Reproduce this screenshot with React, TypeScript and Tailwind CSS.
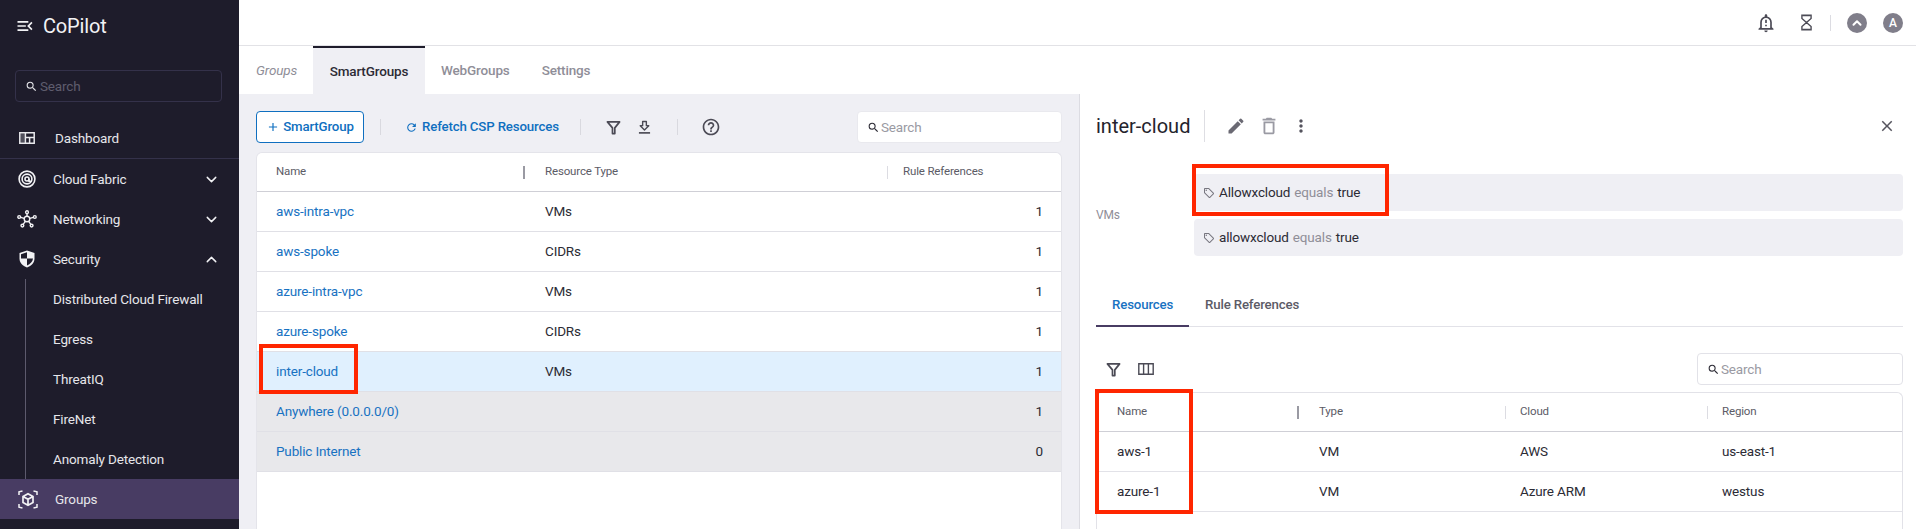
import React from 'react';
import { ChevronDown, ChevronUp } from 'lucide-react';
import {
  MdAdd,
  MdClose,
  MdEdit,
  MdHelpOutline,
  MdMenuOpen,
  MdMoreVert,
  MdOutlineDelete,
  MdOutlineLocalOffer,
  MdOutlineNotificationImportant,
  MdRefresh,
  MdSearch,
} from 'react-icons/md';

const FilterIcon = ({ className }: { className?: string }) => (
  <svg viewBox="0 0 16 16" className={className} fill="none" stroke="currentColor" strokeWidth="1.8">
    <path d="M1.5 2h13L9.4 8.4V14.5H6.9V8.4z" strokeLinejoin="round" />
  </svg>
);

const DownloadIcon = ({ className }: { className?: string }) => (
  <svg viewBox="0 0 14 16" className={className} fill="none" stroke="currentColor" strokeWidth="1.5">
    <path d="M5 1.5h4v4.500h2.600L7 10.600 2.400 6H5z" strokeLinejoin="round" />
    <path d="M1 13.800h12" strokeWidth="1.800" />
  </svg>
);

const ColumnsIcon = ({ className }: { className?: string }) => (
  <svg viewBox="0 0 16 12" className={className} fill="none" stroke="currentColor" strokeWidth="1.4">
    <path d="M.8.8h14.400v10.400H.8zM5.600.8v10.400M10.400.8v10.400" />
  </svg>
);

const HourglassIcon = ({ className }: { className?: string }) => (
  <svg viewBox="0 0 12 18" className={className} fill="none" stroke="currentColor" strokeWidth="1.500">
    <path d="M1 1h10v3.600L6 9l5 4.400V17H1v-3.600L6 9 1 4.600z" />
    <path d="M1.500 1.500h9M1.500 16.500h9" strokeWidth="1.500" />
  </svg>
);

const DashboardIcon = () => (
  <svg viewBox="0 0 16 12" className="w-[16px] h-[12px]" fill="none" stroke="#e8e8ec" strokeWidth="1.500">
    <path d="M.8.8h14.400v10.400H.8zM6.400.8v10.400M6.400 5.400h8.800M10.600 5.400v5.800" />
    <path d="M1.500 1.500h4.200v9H1.500z" fill="#e8e8ec" fillOpacity=".25" stroke="none" />
  </svg>
);

const FabricIcon = () => (
  <svg viewBox="0 0 18 18" className="w-[18px] h-[18px]" fill="none" stroke="#f2f2f5" strokeWidth="1.600">
    <circle cx="9" cy="9" r="7.900" />
    <circle cx="9" cy="9" r="4.900" />
    <circle cx="9" cy="9" r="2" />
    <path d="M11 9v2.200h3" />
  </svg>
);

const NetworkIcon = () => (
  <svg viewBox="0 0 20 18" className="w-[20px] h-[18px]" fill="none" stroke="#f2f2f5" strokeWidth="1.400">
    <circle cx="10" cy="9" r="2.800" />
    <circle cx="10" cy="2.200" r="1.400" />
    <circle cx="2.200" cy="7" r="1.400" />
    <circle cx="17.800" cy="7" r="1.400" />
    <circle cx="5.400" cy="15.600" r="1.400" />
    <circle cx="14.600" cy="15.600" r="1.400" />
    <path d="M10 3.600v2.600M3.600 7.400l3.600 1M16.400 7.400l-3.600 1M6.100 14.400l2.300-3.100M13.900 14.400l-2.300-3.100" />
  </svg>
);

const ShieldIcon = () => (
  <svg viewBox="0 0 16 18" className="w-[16px] h-[18px]">
    <path d="M8 .5 15.500 3v5.600c0 4.200-3 7.500-7.500 8.900C3.500 16.100.5 12.800.5 8.600V3z" fill="#f2f2f5" />
    <path d="M8 2.200V8.500H2V4.200zM8 8.500h6c-.3 3-2.600 5.500-6 6.900z" fill="#1e1c2b" />
  </svg>
);

const CubeIcon = () => (
  <svg viewBox="0 0 20 19" className="w-[20px] h-[19px]" fill="none" stroke="#f2f2f5" strokeWidth="1.500">
    <path d="M1 5V1.800L4.500 1M15.500 1 19 1.800V5M1 14v3.200l3.500.8M15.500 18l3.500-.8V14" />
    <path d="M10 3.800 15 6.500v6L10 15.200 5 12.500v-6zM5 6.500l5 2.800 5-2.800M10 9.300v5.900" strokeWidth="1.700" />
  </svg>
);

const NavRow = ({ icon, label, open, sub }: { icon: React.ReactNode; label: string; open?: boolean; sub?: boolean }) => (
  <div className="h-[40px] flex items-center pl-[17px] pr-[19px]">
    <div className="w-[20px] flex justify-center">{icon}</div>
    <span className="ml-[16px] text-[13.5px] text-[#e6e6ea] flex-1">{label}</span>
    {sub && (open ? <ChevronUp size={17} color="#f2f2f5" strokeWidth={2} /> : <ChevronDown size={17} color="#f2f2f5" strokeWidth={2} />)}
  </div>
);

const Sidebar = () => (
  <aside className="w-[239px] shrink-0 h-[529px] bg-[#1e1c2b] flex flex-col overflow-hidden">
    <div className="h-[52px] flex items-center pl-[15px]">
      <MdMenuOpen size={20} color="#f2f2f5" />
      <span className="ml-[8px] text-[20px] text-[#f2f2f5]">CoPilot</span>
    </div>
    <div className="mt-[18px] ml-[15px] w-[207px] h-[32px] rounded-[4px] border border-[#34314a] flex items-center pl-[9px]">
      <MdSearch size={13} color="#e6e6ea" />
      <span className="ml-[2px] text-[13.5px] text-[#5f5d6e]">Search</span>
    </div>
    <div className="mt-[16px] h-[41px] flex items-center pl-[19px] border-b border-[#34314a]">
      <DashboardIcon />
      <span className="ml-[20px] text-[13.5px] text-[#e6e6ea]">Dashboard</span>
    </div>
    <NavRow icon={<FabricIcon />} label="Cloud Fabric" sub />
    <NavRow icon={<NetworkIcon />} label="Networking" sub />
    <NavRow icon={<ShieldIcon />} label="Security" sub open />
    <div className="ml-[25px] border-l border-[#5d5a6d] pl-[27px]">
      {['Distributed Cloud Firewall', 'Egress', 'ThreatIQ', 'FireNet', 'Anomaly Detection'].map((s) => (
        <div key={s} className="h-[40px] flex items-center text-[13.5px] text-[#e6e6ea]">
          {s}
        </div>
      ))}
    </div>
    <div className="h-[40px] bg-[#483c63] flex items-center pl-[18px]">
      <CubeIcon />
      <span className="ml-[17px] text-[13.5px] text-[#e6e6ea]">Groups</span>
    </div>
  </aside>
);

const SearchBox = ({ width, bordered }: { width: string; bordered?: boolean }) => (
  <div className={`${width} h-[32px] rounded-[4px] bg-white flex items-center pl-[9px] border ${bordered ? 'border-[#e2e2e8]' : 'border-[#e9e9ee]'}`}>
    <MdSearch size={13} color="#2c2b35" />
    <span className="ml-[1px] text-[13.5px] text-[#9a9aa3]">Search</span>
  </div>
);

const groups = [
  { name: 'aws-intra-vpc', type: 'VMs', refs: 1, bg: 'bg-white' },
  { name: 'aws-spoke', type: 'CIDRs', refs: 1, bg: 'bg-white' },
  { name: 'azure-intra-vpc', type: 'VMs', refs: 1, bg: 'bg-white' },
  { name: 'azure-spoke', type: 'CIDRs', refs: 1, bg: 'bg-white' },
  { name: 'inter-cloud', type: 'VMs', refs: 1, bg: 'bg-[#e0f0fe]' },
  { name: 'Anywhere (0.0.0.0/0)', type: '', refs: 1, bg: 'bg-[#e8e8eb]' },
  { name: 'Public Internet', type: '', refs: 0, bg: 'bg-[#e8e8eb]' },
];

const GroupsPanel = () => (
  <div className="w-[841px] shrink-0 bg-[#efeff4] border-r border-[#dcdce2] pl-[17px] pr-[17px] pt-[17px] h-[435px] overflow-hidden">
    <div className="h-[32px] flex items-center">
      <button className="w-[108px] h-[32px] rounded-[4px] border border-[#0f6fc0] bg-white flex items-center justify-center text-[#0f6fc0] text-[13.25px] font-medium">
        <MdAdd size={14} />
        <span className="ml-[3px]">SmartGroup</span>
      </button>
      <div className="ml-[16px] w-px h-[16px] bg-[#d9d9df]" />
      <MdRefresh size={13} className="ml-[24px] text-[#0f6fc0]" />
      <span className="ml-[4px] w-[143px] whitespace-nowrap text-[13.25px] font-medium text-[#0f6fc0]">Refetch CSP Resources</span>
      <div className="ml-[15px] w-px h-[16px] bg-[#d9d9df]" />
      <FilterIcon className="ml-[25px] w-[15px] h-[15px] text-[#4b4a55]" />
      <DownloadIcon className="ml-[17px] w-[13px] h-[15px] text-[#4b4a55]" />
      <div className="ml-[26px] w-px h-[16px] bg-[#d9d9df]" />
      <MdHelpOutline size={20} className="ml-[23px] text-[#4b4a55]" />
      <div className="flex-1" />
      <SearchBox width="w-[205px]" />
    </div>
    <div className="mt-[9px] h-[400px] bg-white rounded-t-[6px] border-x border-t border-[#e4e4ea]">
      <div className="h-[39px] grid grid-cols-[268px_363px_1fr] items-center border-b border-[#cfcfd6] text-[11.5px] text-[#5c5b66]">
        <div className="pl-[19px] flex items-center justify-between">
          Name
          <span className="w-[2px] h-[13px] bg-[#9a9aa3]" />
        </div>
        <div className="pl-[20px] flex items-center justify-between">
          Resource Type
          <span className="w-px h-[13px] bg-[#dcdce2]" />
        </div>
        <div className="pl-[15px]">Rule References</div>
      </div>
      {groups.map((g) => (
        <div key={g.name} className={`h-[40px] grid grid-cols-[268px_363px_1fr] items-center border-b border-[#e0e0e6] text-[13.5px] ${g.bg}`}>
          <div className="pl-[19px] text-[#1872c2]">{g.name}</div>
          <div className="pl-[20px] text-[#2c2b35]">{g.type}</div>
          <div className="pr-[18px] text-right text-[#2c2b35]">{g.refs}</div>
        </div>
      ))}
    </div>
  </div>
);

const Rule = ({ name }: { name: string }) => (
  <div className="h-[37px] rounded-[4px] bg-[#efeff4] flex items-center pl-[9px] text-[13.5px]">
    <MdOutlineLocalOffer size={12} className="text-[#77767f]" />
    <span className="ml-[4px] text-[#2c2b35]">{name}</span>
    <span className="ml-[4px] text-[#8f8e98]">equals</span>
    <span className="ml-[4px] text-[#2c2b35]">true</span>
  </div>
);

const resources = [
  { name: 'aws-1', type: 'VM', cloud: 'AWS', region: 'us-east-1' },
  { name: 'azure-1', type: 'VM', cloud: 'Azure ARM', region: 'westus' },
];

const ResourcePanel = () => (
  <div className="flex-1 h-[435px] overflow-hidden pl-[16px] pr-[13px] pt-[16px]">
    <div className="h-[32px] flex items-center">
      <span className="w-[93px] whitespace-nowrap text-[20px] tracking-normal text-[#24232c]">inter-cloud</span>
      <div className="ml-[15px] w-px h-[32px] bg-[#dedee3]" />
      <MdEdit size={20} className="ml-[21px] text-[#6a6973]" />
      <MdOutlineDelete size={22} className="ml-[12px] text-[#9a9aa3]" />
      <MdMoreVert size={20} className="ml-[11px] text-[#55545e]" />
      <div className="flex-1" />
      <MdClose size={18} className="mr-[7px] text-[#55545e]" />
    </div>
    <div className="mt-[32px] flex items-center">
      <span className="w-[98px] shrink-0 text-[12px] text-[#8f8e98]">VMs</span>
      <div className="flex-1 flex flex-col gap-[8px]">
        <Rule name="Allowxcloud" />
        <Rule name="allowxcloud" />
      </div>
    </div>
    <div className="mt-[37px] h-[34px] flex border-b border-[#e2e2e8] text-[13.25px] font-medium">
      <div className="w-[93px] h-[34px] pl-[16px] pt-[2px] border-b-2 border-[#483c63] text-[#1872c2]">Resources</div>
      <div className="ml-[16px] pt-[2px] text-[#5c5b66]">Rule References</div>
    </div>
    <div className="mt-[26px] h-[32px] flex items-center">
      <FilterIcon className="ml-[10px] w-[15px] h-[15px] text-[#4b4a55]" />
      <ColumnsIcon className="ml-[17px] w-[16px] h-[12px] text-[#4b4a55]" />
      <div className="flex-1" />
      <SearchBox width="w-[206px]" bordered />
    </div>
    <div className="mt-[7px] h-[200px] rounded-t-[6px] border-x border-t border-[#e2e2e8]">
      <div className="h-[39px] grid grid-cols-[202px_207px_202px_1fr] items-center border-b border-[#cfcfd6] text-[11.5px] text-[#5c5b66]">
        <div className="pl-[20px] flex justify-between items-center">
          Name
          <span className="w-[2px] h-[13px] bg-[#9a9aa3]" />
        </div>
        <div className="pl-[20px] flex justify-between items-center">
          Type
          <span className="w-px h-[13px] bg-[#dcdce2]" />
        </div>
        <div className="pl-[14px] flex justify-between items-center">
          Cloud
          <span className="w-px h-[13px] bg-[#dcdce2]" />
        </div>
        <div className="pl-[14px]">Region</div>
      </div>
      {resources.map((r) => (
        <div key={r.name} className="h-[40px] grid grid-cols-[202px_207px_202px_1fr] items-center border-b border-[#e2e2e8] text-[13.5px] text-[#2c2b35]">
          <div className="pl-[20px]">{r.name}</div>
          <div className="pl-[20px]">{r.type}</div>
          <div className="pl-[14px]">{r.cloud}</div>
          <div className="pl-[14px]">{r.region}</div>
        </div>
      ))}
    </div>
  </div>
);

const Annotation = ({ className }: { className: string }) => (
  <div className={`absolute border-[4px] border-[#ff2600] pointer-events-none ${className}`} />
);

export default function App() {
  return (
    <div className="relative w-[1916px] h-[529px] overflow-hidden flex bg-white tracking-[-0.15px] font-['Roboto',sans-serif]">
      <Sidebar />
      <main className="flex-1 flex flex-col min-w-0">
        <header className="h-[46px] shrink-0 border-b border-[#e2e2e6] flex items-center justify-end pr-[13px]">
          <MdOutlineNotificationImportant size={20} className="text-[#4b4a55]" />
          <HourglassIcon className="ml-[25px] w-[11px] h-[17px] text-[#4b4a55]" />
          <div className="ml-[18px] w-px h-[16px] bg-[#dcdce2]" />
          <div className="ml-[16px] w-[20px] h-[20px] rounded-full bg-[#807e8a] flex items-center justify-center">
            <ChevronUp size={14} color="#fff" strokeWidth={3.5} />
          </div>
          <div className="ml-[16px] w-[20px] h-[20px] rounded-full bg-[#807e8a] flex items-center justify-center text-[12px] font-medium text-white">A</div>
        </header>
        <nav className="h-[48px] shrink-0 flex items-center text-[13.5px] pl-[17px]">
          <span className="w-[57px] italic text-[#8f8e98]">Groups</span>
          <div className="w-[112px] h-[48px] bg-[#efeff4] border-t-2 border-[#1e1c2b] flex items-center justify-center font-medium text-[#2c2b35]">SmartGroups</div>
          <span className="ml-[16px] font-medium text-[#8f8e98]">WebGroups</span>
          <span className="ml-[32px] font-medium text-[#8f8e98]">Settings</span>
        </nav>
        <div className="flex-1 flex min-h-0">
          <GroupsPanel />
          <ResourcePanel />
        </div>
      </main>
      <Annotation className="left-[259px] top-[344px] w-[99px] h-[50px]" />
      <Annotation className="left-[1192px] top-[164px] w-[197px] h-[52px]" />
      <Annotation className="left-[1095px] top-[389px] w-[98px] h-[125px]" />
    </div>
  );
}
